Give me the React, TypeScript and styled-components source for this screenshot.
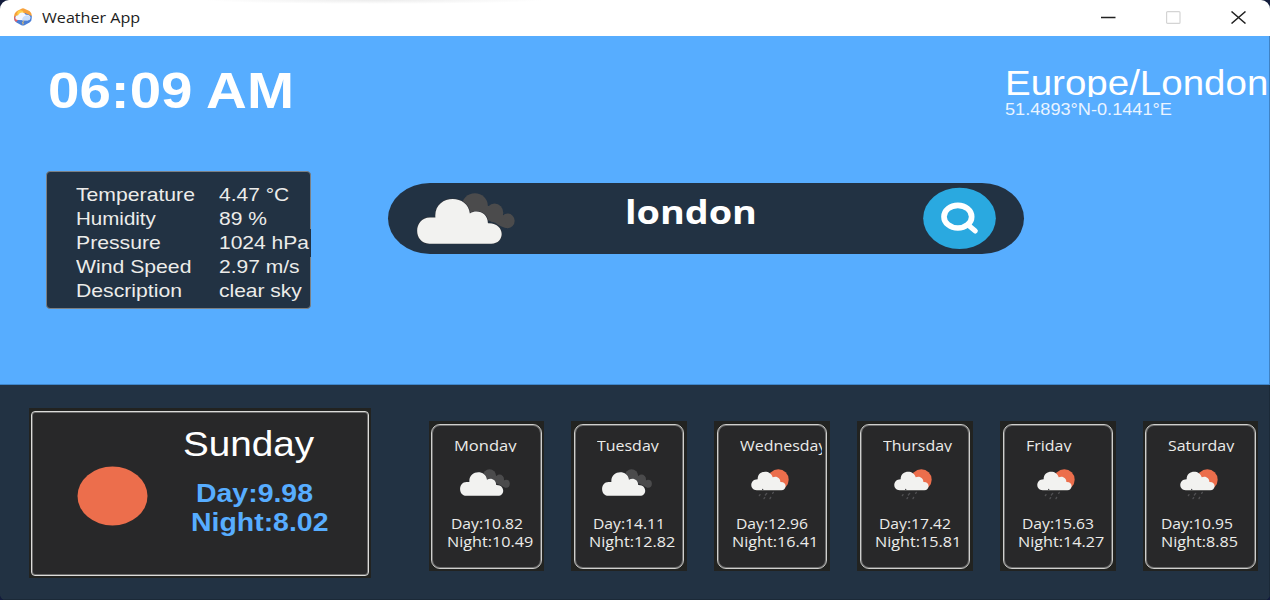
import React from "react";
import styled, { createGlobalStyle } from "styled-components";

const SKY = "#57adff";
const NAVY = "#223243";
const CARD = "#282829";
const SANS = '"Liberation Sans", Arial, sans-serif';
const UI = '"Open Sans", "Noto Sans", sans-serif';

const GlobalStyle = createGlobalStyle`
  * { box-sizing: border-box; }
  html, body { margin: 0; padding: 0; background: #131c3c; }
  body { width: 1270px; height: 600px; overflow: hidden; }
  svg { display: block; flex: none; }
`;

/* Wide lettering: every label is stretched horizontally from its left edge. */
const Text = styled.div<{
  $size: number;
  $line: number;
  $stretch: number;
  $ui?: boolean;
  $bold?: boolean;
  $color?: string;
  $indent?: number;
}>`
  width: max-content;
  margin-left: ${(p) => p.$indent ?? 0}px;
  font-family: ${(p) => (p.$ui ? UI : SANS)};
  font-size: ${(p) => p.$size}px;
  font-weight: ${(p) => (p.$bold ? 700 : 400)};
  line-height: ${(p) => p.$line}px;
  color: ${(p) => p.$color ?? "#fff"};
  white-space: pre;
  transform: scaleX(${(p) => p.$stretch});
  transform-origin: 0 50%;
`;

const Window = styled.div`
  display: flex;
  flex-direction: column;
  width: 1270px;
  height: 600px;
  border-radius: 9px 9px 6px 6px;
  overflow: hidden;
  background: ${NAVY};
`;

const TitleBar = styled.header`
  display: flex;
  align-items: center;
  height: 36px;
  padding: 0 24px 2px 13px;
  background: radial-gradient(ellipse 170px 4px at 375px 0, #ececec, #fff);
`;

const TitleText = styled.div`
  flex: 1;
  padding: 1px 0 0 8.5px;
`;

const Controls = styled.div`
  display: flex;
  gap: 50px;
`;

const Main = styled.main`
  height: 349px;
  padding: 32px 0 0 46px;
  background: ${SKY};
  border-right: 1px solid #3f82c4;
  border-bottom: 1px solid #3f86cb;
`;

const TopRow = styled.div`
  display: flex;
  justify-content: space-between;
  height: 103px;
`;

const Clock = styled.div`
  padding: 1px 0 0 1.5px;
`;

const Place = styled.div`
  width: 264.5px;
`;

const PlaceName = styled.div`
  height: 28.5px;
  overflow: hidden;
`;

const MiddleRow = styled.div`
  display: flex;
  align-items: flex-start;
`;

const Details = styled.dl`
  display: grid;
  grid-template-columns: 143px 1fr;
  grid-auto-rows: 24px;
  width: 265px;
  height: 138px;
  margin: 0 77px 0 0;
  padding: 10px 0 0 28.5px;
  background: ${NAVY};
  border: 1px solid #7b8084;
  border-radius: 4px;
`;

const Value = styled.dd<{ $wide: boolean }>`
  margin: ${(p) => (p.$wide ? "-1px -1px 0 0" : "0")};
  padding-top: ${(p) => (p.$wide ? 1 : 0)}px;
  height: ${(p) => (p.$wide ? 28 : 24)}px;
  background: ${(p) => (p.$wide ? NAVY : "transparent")};
`;

const SearchBar = styled.div`
  display: flex;
  align-items: center;
  width: 636px;
  height: 71px;
  margin-top: 11.5px;
  padding: 0 28.5px 0 29px;
  background: ${NAVY};
  border-radius: 42px / 35.5px;
`;

const Query = styled.div`
  flex: 1;
  height: 61px;
  padding-left: 110px;
`;

const Forecast = styled.section`
  display: flex;
  align-items: flex-start;
  height: 215px;
  padding: 23px 0 0 28.5px;
  background: ${NAVY};
  border-right: 1px solid #1b2937;
  border-bottom: 1px solid #1b2937;
`;

const Frame = styled.div<{ $w: number; $h: number }>`
  flex: none;
  width: ${(p) => p.$w}px;
  height: ${(p) => p.$h}px;
  padding: 2.5px;
  background: #222321;
`;

const Today = styled.article`
  display: flex;
  height: 100%;
  padding: 13px 0 0 44.5px;
  background: ${CARD};
  border: 1px solid #dcdcda;
  border-radius: 4px;
  box-shadow: inset 0 0 0 1px #6c6c6c;
`;

const SunSlot = styled.div`
  width: 106.5px;
  padding-top: 41px;
`;

const Temperatures = styled.div`
  padding-top: 16px;
`;

const Days = styled.div`
  display: flex;
  gap: 27.4px;
  margin: 13px 0 0 57.5px;
`;

const DayCard = styled.article`
  height: 100%;
  padding-top: 10px;
  background: ${CARD};
  border: 1px solid #cfcfcd;
  border-radius: 9px;
  box-shadow: inset 0 0 0 1px #6c6c6c;
`;

const DayName = styled.div<{ $tall: boolean }>`
  width: 82px;
  height: ${(p) => (p.$tall ? 21 : 17)}px;
  margin: 0 0 ${(p) => (p.$tall ? 13 : 17)}px 22px;
  overflow: hidden;
`;

const IconSlot = styled.div<{ $left: number }>`
  height: 46px;
  padding-left: ${(p) => p.$left}px;
`;

function AppIcon() {
  return (
    <svg width="20" height="18" viewBox="0 0 20 18" preserveAspectRatio="none">
      <path d="M1 9 Q1 5 4 3 L8 1 Q10 -0.3 12 1 L16.5 3 Q19 5 18.8 8 L10 9Z" fill="#f7a13b" />
      <path d="M1 9 Q1 13 3.5 14.5 L8 17 Q10 18 12 17 L16.5 14.5 Q19 13 18.8 8 L12 5Z" fill="#4a7fd6" />
      <path d="M1 8 Q0.8 12 3 14 L5 12Z" fill="#ea5f60" />
      <circle cx="7.5" cy="5.5" r="3.2" fill="#ffd04a" />
      <path d="M5 12 Q2.2 11.8 2.4 9.2 Q2.8 7.2 5.2 7.3 Q6.2 4.3 9.4 4.4 Q11.8 4.6 12.8 6.8 Q17 6.4 17.4 9.4 Q17.4 12 14.8 12.2Z" fill="#f3f7ff" />
      <path d="M9 12.4 Q9.3 8 13.5 7.2 Q17.3 7.3 17.2 10 Q16.8 12.2 14.8 12.4Z" fill="#c9defa" />
      <path d="M10.8 12.5 L9.4 15 H10.4 L9.8 16.500" stroke="#ffc85a" strokeWidth="0.8" fill="none" />
    </svg>
  );
}

function Clouds({ width, height }: { width: number; height: number }) {
  return (
    <svg width={width} height={height} viewBox="111 66 293 152" preserveAspectRatio="none">
      <g fill="#4b4b4c">
        <ellipse cx="284" cy="105" rx="39" ry="38" />
        <ellipse cx="343" cy="125" rx="26" ry="28" />
        <ellipse cx="382" cy="149" rx="21" ry="22" />
        <path d="M250 105H343L368 130L382 171Q360 168 345 155L270 130Z" />
      </g>
      <path
        d="M148 217C99 217 99 139 150 139H166C160 69 264 66 269 127C292 113 323 126 323 156C376 154 376 217 333 217Z"
        fill="#f2f2f0"
        stroke="#2f3238"
        strokeWidth="3"
        paintOrder="stroke"
      />
    </svg>
  );
}

function SunRain() {
  return (
    <svg width="38" height="31" viewBox="154 173 114 93" preserveAspectRatio="none">
      <circle cx="236" cy="205" r="31" fill="#ec6e4c" />
      <path
        d="M171 237C149 237 149 204 174 204C173 175 214 174 219 198C232 192 243 202 242 212C264 211 261 237 245 237Z"
        fill="#f2f2f0"
      />
      <g stroke="#505052" strokeWidth="4" strokeLinecap="round">
        <path d="M181 250L179 253M201 246L197 251M195 259L193 262M213 258L211 262M221 243L219 246M189 234V235" />
      </g>
    </svg>
  );
}

function SearchButton() {
  return (
    <svg width="73" height="62" viewBox="0 0 219 186" preserveAspectRatio="none">
      <ellipse cx="109.500" cy="94" rx="109" ry="92" fill="#2aa9e0" />
      <ellipse cx="104.500" cy="89" rx="41.500" ry="34" fill="none" stroke="#fff" strokeWidth="17" />
      <path d="M139 117L157 132" stroke="#fff" strokeWidth="15" strokeLinecap="round" />
    </svg>
  );
}

const details = [
  ["Temperature", "4.47 °C"],
  ["Humidity", "89 %"],
  ["Pressure", "1024 hPa"],
  ["Wind Speed", "2.97 m/s"],
  ["Description", "clear sky"],
];

const week = [
  { name: "Monday", day: "10.82", night: "10.49", rain: false },
  { name: "Tuesday", day: "14.11", night: "12.82", rain: false },
  { name: "Wednesday", day: "12.96", night: "16.41", rain: true },
  { name: "Thursday", day: "17.42", night: "15.81", rain: true },
  { name: "Friday", day: "15.63", night: "14.27", rain: true },
  { name: "Saturday", day: "10.95", night: "8.85", rain: true },
];

export default function App() {
  return (
    <>
      <GlobalStyle />
      <Window>
        <TitleBar>
          <AppIcon />
          <TitleText>
            <Text $ui $size={14} $line={20} $stretch={1.15} $color="#1c1c1c">Weather App</Text>
          </TitleText>
          <Controls>
            <svg width="15" height="13" viewBox="0 0 15 13"><path d="M0 6.500H14.500" stroke="#222" strokeWidth="1.400" /></svg>
            <svg width="15" height="13" viewBox="0 0 15 13"><rect x="0.600" y="0.600" width="13.400" height="11.800" rx="1" fill="none" stroke="#d4d4d4" strokeWidth="1.200" /></svg>
            <svg width="15" height="13" viewBox="0 0 15 13"><path d="M0.500 0.500L14.500 12.500M14.500 0.500L0.500 12.500" stroke="#222" strokeWidth="1.500" /></svg>
          </Controls>
        </TitleBar>

        <Main>
          <TopRow>
            <Clock>
              <Text $bold $size={50} $line={45} $stretch={1.13}>06:09 AM</Text>
            </Clock>
            <Place>
              <PlaceName>
                <Text $size={35} $line={30} $stretch={1.1}>Europe/London</Text>
              </PlaceName>
              <Text $size={16.5} $line={25} $stretch={1.1} $color="#eaf4ff">51.4893°N-0.1441°E</Text>
            </Place>
          </TopRow>
          <MiddleRow>
            <Details>
              {details.map(([label, value]) => (
                <React.Fragment key={label}>
                  <dt><Text $size={19} $line={26} $stretch={label === "Humidity" ? 1.08 : 1.115} $color="#ececea">{label}</Text></dt>
                  <Value $wide={label === "Pressure"}>
                    <Text $size={19} $line={26} $stretch={1.105} $color="#ececea">{value}</Text>
                  </Value>
                </React.Fragment>
              ))}
            </Details>
            <SearchBar>
              <Clouds width={98} height={51} />
              <Query>
                <Text $ui $bold $size={31.5} $line={48} $stretch={1.2}>london</Text>
              </Query>
              <SearchButton />
            </SearchBar>
          </MiddleRow>
        </Main>

        <Forecast>
          <Frame $w={342.5} $h={170}>
            <Today>
              <SunSlot>
                <svg width="71" height="60" viewBox="0 0 71 60"><ellipse cx="35.500" cy="30" rx="35" ry="29.500" fill="#ec6e4c" /></svg>
              </SunSlot>
              <div>
                <Text $size={35} $line={38} $stretch={1.105}>Sunday</Text>
                <Temperatures>
                  <Text $bold $size={25.5} $line={29} $stretch={1.115} $color={SKY} $indent={13}>Day:9.98</Text>
                  <Text $bold $size={25.5} $line={29} $stretch={1.115} $color={SKY} $indent={8}>Night:8.02</Text>
                </Temperatures>
              </div>
            </Today>
          </Frame>
          <Days>
            {week.map((d) => (
              <Frame key={d.name} $w={115.5} $h={150}>
                <DayCard>
                  <DayName $tall={d.name === "Wednesday"}>
                    <Text $ui $size={14.5} $line={21} $stretch={d.name === "Monday" ? 1.14 : 1.1} $color="#ececea">{d.name}</Text>
                  </DayName>
                  <IconSlot $left={d.rain ? 33.5 : 27.5}>
                    {d.rain ? <SunRain /> : <Clouds width={50} height={27} />}
                  </IconSlot>
                  <Text $ui $size={14.5} $line={18} $stretch={1.08} $color="#ececea" $indent={d.name === "Saturday" ? 14.5 : 18.5}>{`Day:${d.day}`}</Text>
                  <Text $ui $size={14.5} $line={18} $stretch={1.115} $color="#ececea" $indent={14.5}>{`Night:${d.night}`}</Text>
                </DayCard>
              </Frame>
            ))}
          </Days>
        </Forecast>
      </Window>
    </>
  );
}
